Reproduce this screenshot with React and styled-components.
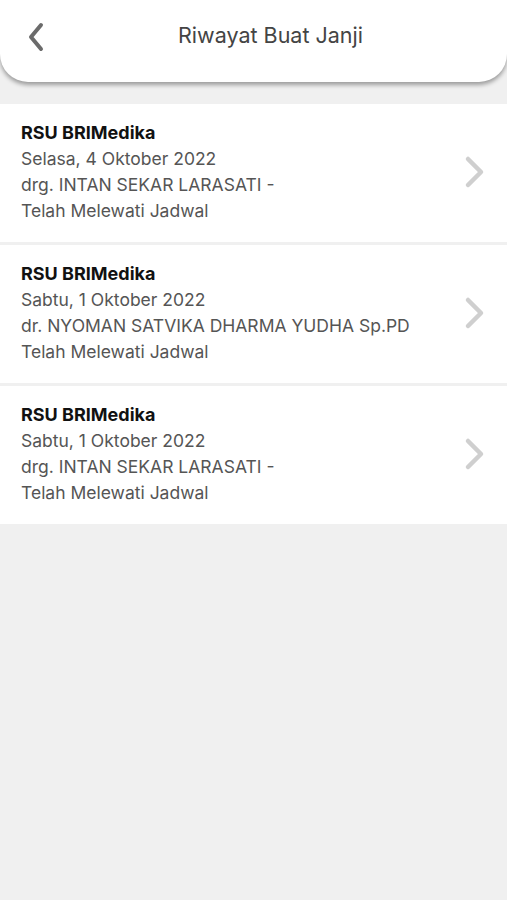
import React from 'react';
import styled, { createGlobalStyle } from 'styled-components';

const GlobalStyle = createGlobalStyle`
  html, body {
    margin: 0;
    padding: 0;
    background: #f0f0f0;
  }
  body {
    font-family: Inter, "Noto Sans", "Liberation Sans", sans-serif;
  }
`;

const Page = styled.div`
  min-height: 900px;
  background: #f0f0f0;
`;

const Header = styled.div`
  height: 82px;
  background: #fff;
  border-radius: 0 0 28px 28px;
  box-shadow: 0 3px 4px rgba(0, 0, 0, 0.35);
  display: flex;
  align-items: center;
  justify-content: center;
  position: relative;
  padding: 0 0 12px 34px;
  box-sizing: border-box;
`;

const BackButton = styled.button`
  position: absolute;
  left: 21px;
  top: 20px;
  width: 32px;
  height: 34px;
  border: none;
  background: none;
  padding: 0;
  display: flex;
  align-items: center;
  justify-content: center;
`;

const Title = styled.h1`
  margin: 0;
  font-size: 21.5px;
  font-weight: 400;
  color: #444;
`;

const List = styled.div`
  margin-top: 22px;
  display: flex;
  flex-direction: column;
  gap: 3px;
  background: #f0f0f0;
`;

const Item = styled.div`
  background: #fff;
  display: flex;
  align-items: center;
  padding: 16px 20px 18px 21px;
`;

const Info = styled.div`
  flex: 1;
  font-size: 17.5px;
  line-height: 26px;
  color: #555;
`;

const Hospital = styled.div`
  font-weight: 700;
  font-size: 18px;
  color: #111;
`;

const Line = styled.div``;

const Chevron = () => (
  <svg width="24" height="34" viewBox="0 0 24 34">
    <path d="M5 4 L18 17 L5 30" fill="none" stroke="#cfcfcf" strokeWidth="4.5" strokeLinecap="round" strokeLinejoin="round" />
  </svg>
);

const BackIcon = () => (
  <svg width="22" height="30" viewBox="0 0 22 30">
    <path d="M15 3 L5 15 L15 27" fill="none" stroke="#6b6b6b" strokeWidth="4" strokeLinecap="round" strokeLinejoin="round" />
  </svg>
);

const appointments = [
  {
    hospital: 'RSU BRIMedika',
    date: 'Selasa, 4 Oktober 2022',
    doctor: 'drg. INTAN SEKAR LARASATI -',
    status: 'Telah Melewati Jadwal'
  },
  {
    hospital: 'RSU BRIMedika',
    date: 'Sabtu, 1 Oktober 2022',
    doctor: 'dr. NYOMAN SATVIKA DHARMA YUDHA Sp.PD',
    status: 'Telah Melewati Jadwal'
  },
  {
    hospital: 'RSU BRIMedika',
    date: 'Sabtu, 1 Oktober 2022',
    doctor: 'drg. INTAN SEKAR LARASATI -',
    status: 'Telah Melewati Jadwal'
  }
];

export default function App() {
  return (
    <Page>
      <GlobalStyle />
      <Header>
        <BackButton>
          <BackIcon />
        </BackButton>
        <Title>Riwayat Buat Janji</Title>
      </Header>
      <List>
        {appointments.map((a, i) => (
          <Item key={i}>
            <Info>
              <Hospital>{a.hospital}</Hospital>
              <Line>{a.date}</Line>
              <Line>{a.doctor}</Line>
              <Line>{a.status}</Line>
            </Info>
            <Chevron />
          </Item>
        ))}
      </List>
    </Page>
  );
}
